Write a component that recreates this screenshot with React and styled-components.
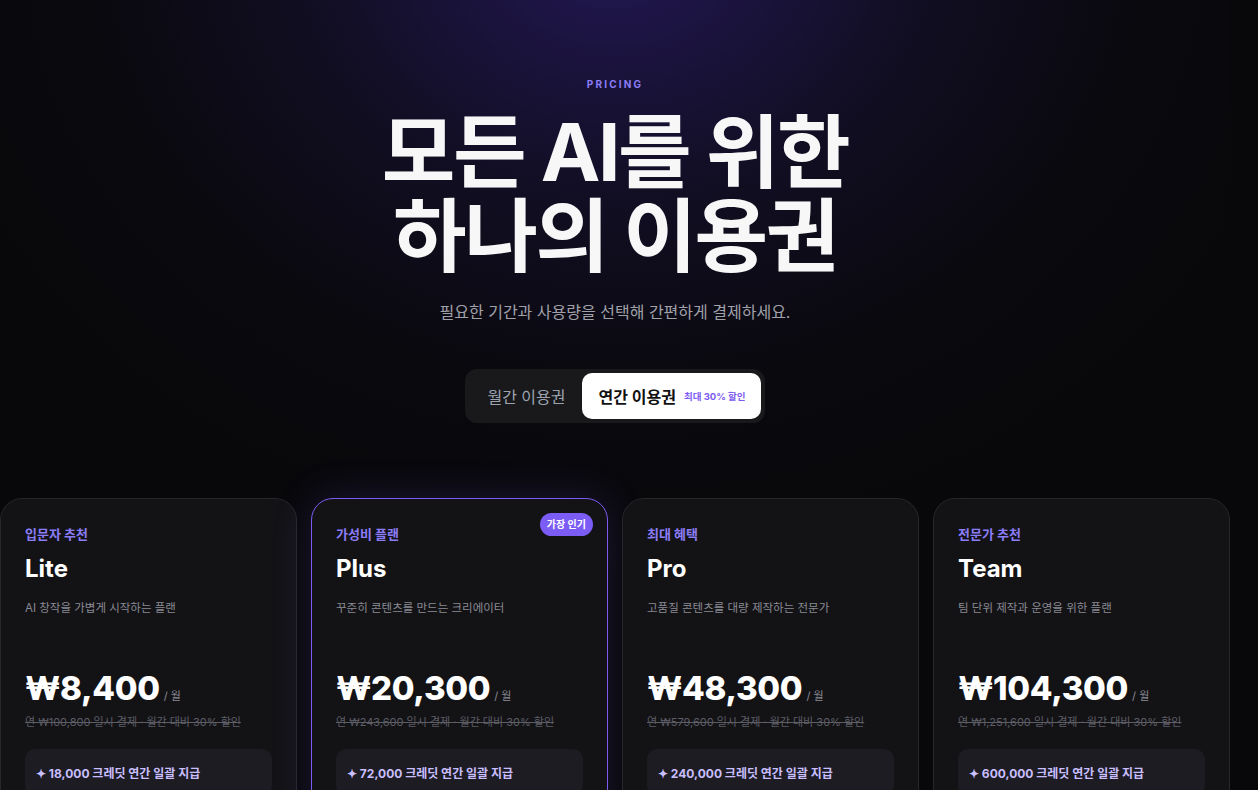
import React from "react";
import styled, { createGlobalStyle } from "styled-components";

const accent = "#8b7cf7";
const font = `"Inter", "Noto Sans CJK KR", sans-serif`;

const GlobalStyle = createGlobalStyle`
  html, body {
    margin: 0;
    padding: 0;
    background: #08080a;
    overflow: hidden;
  }
  body {
    font-family: ${font};
    color: #fff;
  }
`;

const Page = styled.main`
  width: 1230px;
  height: 790px;
  background:
    radial-gradient(ellipse 760px 640px at 50% -60px, rgba(42, 28, 104, 0.8) 0%, rgba(24, 18, 52, 0.6) 40%, rgba(12, 11, 20, 0.4) 70%, rgba(8, 8, 10, 0) 100%),
    #08080a;
  padding-top: 76px;
  box-sizing: border-box;
`;

const Hero = styled.section`
  display: flex;
  flex-direction: column;
  align-items: center;
  text-align: center;
`;

const Eyebrow = styled.div`
  font-size: 10px;
  font-weight: 700;
  letter-spacing: 0.22em;
  color: ${accent};
  line-height: 16px;
`;

const Title = styled.h1`
  margin: 18px 0 0;
  font-size: 80px;
  line-height: 84px;
  font-weight: 700;
  letter-spacing: -0.03em;
  color: #f7f7f8;
`;

const Subtitle = styled.p`
  margin: 22px 0 0;
  font-size: 16px;
  line-height: 24px;
  color: #a1a1aa;
`;

const Toggle = styled.div`
  margin-top: 45px;
  display: flex;
  align-items: center;
  padding: 4px;
  background: #19191c;
  border-radius: 12px;
`;

const ToggleOption = styled.button`
  border: none;
  font-family: ${font};
  font-size: 16px;
  height: 46px;
  padding: ${({ $active }) => ($active ? "0 15px 0 17px" : "0 16px 0 18px")};
  border-radius: 10px;
  display: flex;
  align-items: center;
  gap: 8px;
  cursor: pointer;
  background: ${({ $active }) => ($active ? "#ffffff" : "transparent")};
  color: ${({ $active }) => ($active ? "#111" : "#9ca3af")};
  font-weight: ${({ $active }) => ($active ? 700 : 400)};
`;

const Discount = styled.span`
  font-size: 9.5px;
  font-weight: 700;
  color: #7c5cf0;
`;

const Grid = styled.section`
  margin-top: 75px;
  display: grid;
  grid-template-columns: repeat(4, 297px);
  gap: 14px;
`;

const Card = styled.article`
  position: relative;
  background: #131316;
  border: 1px solid ${({ $featured }) => ($featured ? "#7c5cf0" : "#26262b")};
  box-shadow: ${({ $featured }) =>
    $featured ? "0 0 40px rgba(124, 92, 240, 0.18)" : "none"};
  border-radius: 22px;
  padding: 25px 24px 24px;
  height: 360px;
  box-sizing: border-box;
`;

const Badge = styled.span`
  position: absolute;
  top: 14px;
  right: 14px;
  background: #7b5cf5;
  color: #fff;
  font-size: 10px;
  font-weight: 700;
  padding: 0 7px;
  height: 23px;
  line-height: 23px;
  border-radius: 12px;
`;

const Label = styled.div`
  font-size: 13px;
  line-height: 20px;
  font-weight: 700;
  color: ${accent};
`;

const PlanName = styled.h2`
  margin: 10px 0 0;
  font-size: 24px;
  line-height: 30px;
  font-weight: 700;
  color: #fff;
`;

const Desc = styled.p`
  margin: 15px 0 0;
  font-size: 11.5px;
  line-height: 18px;
  color: #8a8a93;
`;

const PriceRow = styled.div`
  margin-top: 51px;
  display: flex;
  align-items: baseline;
  gap: 4px;
`;

const Price = styled.span`
  font-size: 33px;
  line-height: 40px;
  font-weight: 800;
  letter-spacing: -0.01em;
  color: #fff;
`;

const Per = styled.span`
  font-size: 11px;
  color: #8a8a93;
`;

const Strike = styled.div`
  margin-top: 6px;
  font-size: 11px;
  line-height: 16px;
  color: #5d5d66;
  text-decoration: line-through;
`;

const Credit = styled.div`
  margin-top: 19px;
  background: #1d1c23;
  border-radius: 10px;
  height: 46px;
  padding: 0 11px;
  display: flex;
  align-items: center;
  font-size: 12px;
  font-weight: 700;
  color: #c9bfff;
`;

const plans = [
  {
    label: "입문자 추천",
    name: "Lite",
    desc: "AI 창작을 가볍게 시작하는 플랜",
    price: "₩8,400",
    yearly: "연 ₩100,800 일시 결제 · 월간 대비 30% 할인",
    credit: "18,000",
  },
  {
    label: "가성비 플랜",
    name: "Plus",
    desc: "꾸준히 콘텐츠를 만드는 크리에이터",
    price: "₩20,300",
    yearly: "연 ₩243,600 일시 결제 · 월간 대비 30% 할인",
    credit: "72,000",
    featured: true,
  },
  {
    label: "최대 혜택",
    name: "Pro",
    desc: "고품질 콘텐츠를 대량 제작하는 전문가",
    price: "₩48,300",
    yearly: "연 ₩579,600 일시 결제 · 월간 대비 30% 할인",
    credit: "240,000",
  },
  {
    label: "전문가 추천",
    name: "Team",
    desc: "팀 단위 제작과 운영을 위한 플랜",
    price: "₩104,300",
    yearly: "연 ₩1,251,600 일시 결제 · 월간 대비 30% 할인",
    credit: "600,000",
  },
];

export default function App() {
  return (
    <>
      <GlobalStyle />
      <Page>
        <Hero>
          <Eyebrow>PRICING</Eyebrow>
          <Title>
            모든 AI를 위한
            <br />
            하나의 이용권
          </Title>
          <Subtitle>필요한 기간과 사용량을 선택해 간편하게 결제하세요.</Subtitle>
          <Toggle>
            <ToggleOption>월간 이용권</ToggleOption>
            <ToggleOption $active>
              연간 이용권 <Discount>최대 30% 할인</Discount>
            </ToggleOption>
          </Toggle>
        </Hero>
        <Grid>
          {plans.map((p) => (
            <Card key={p.name} $featured={p.featured}>
              {p.featured && <Badge>가장 인기</Badge>}
              <Label>{p.label}</Label>
              <PlanName>{p.name}</PlanName>
              <Desc>{p.desc}</Desc>
              <PriceRow>
                <Price>{p.price}</Price>
                <Per>/ 월</Per>
              </PriceRow>
              <Strike>{p.yearly}</Strike>
              <Credit>✦ {p.credit} 크레딧 연간 일괄 지급</Credit>
            </Card>
          ))}
        </Grid>
      </Page>
    </>
  );
}
